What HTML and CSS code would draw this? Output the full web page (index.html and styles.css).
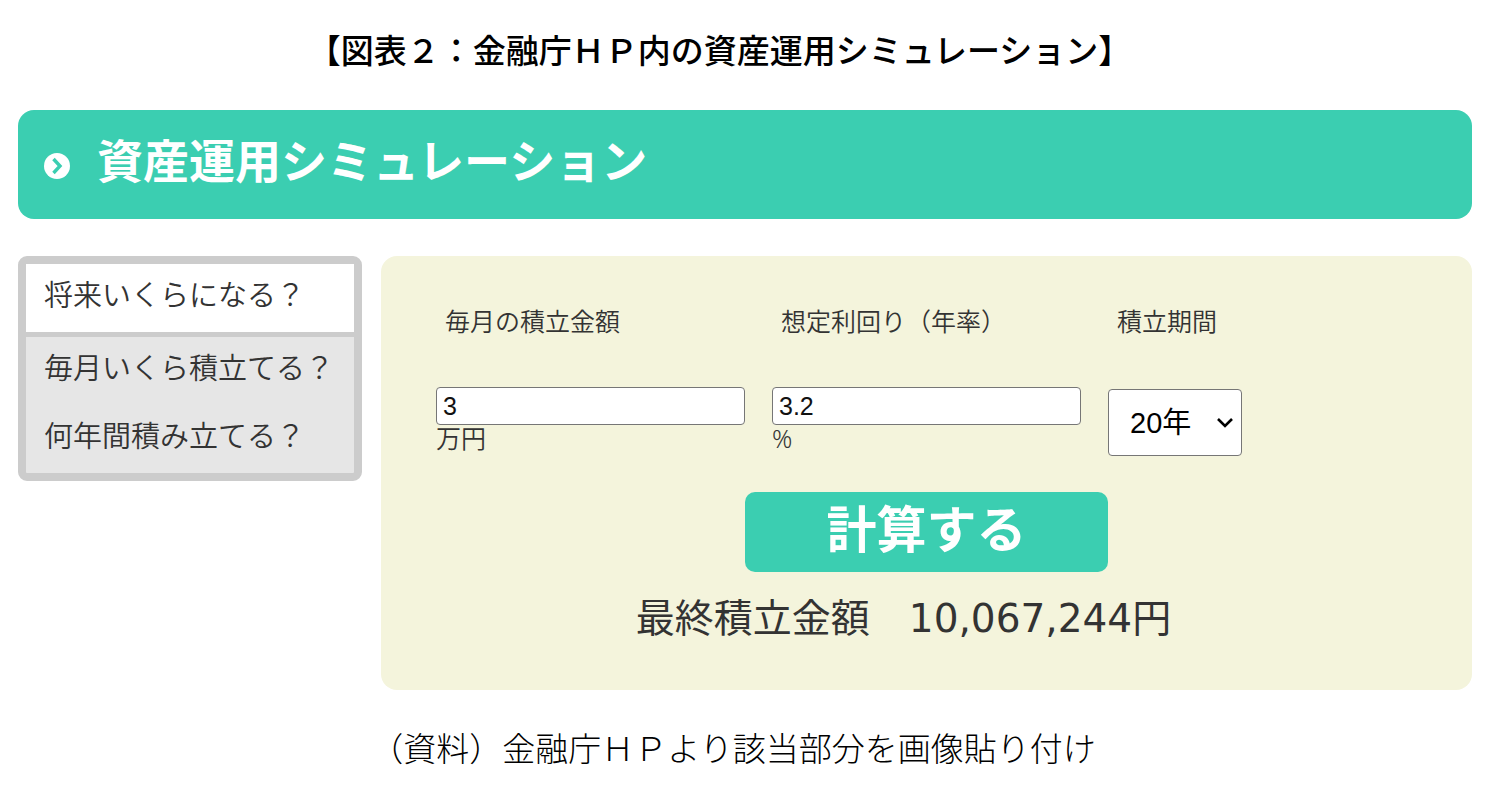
FILE: index.html
```html
<!DOCTYPE html>
<html lang="ja">
<head>
    <meta charset="UTF-8">
    <meta name="viewport" content="width=device-width, initial-scale=1.0">
    <title>資産運用シミュレーション</title>
    <link rel="stylesheet" href="styles.css">
</head>
<body>
    <h1 class="figure-title">【図表２：金融庁ＨＰ内の資産運用シミュレーション】</h1>

    <div class="banner">
        <svg class="banner-icon" viewBox="0 0 26 26" aria-hidden="true">
            <circle cx="13" cy="13" r="13" fill="#fff"/>
            <path d="M9.5 6l6.5 7-6.5 7" fill="none" stroke="#3bceb1" stroke-width="3.4"/>
        </svg>
        <h2>資産運用シミュレーション</h2>
    </div>

    <div class="content">
        <nav class="menu">
            <a href="#" class="active">将来いくらになる？</a>
            <a href="#">毎月いくら積立てる？</a>
            <a href="#">何年間積み立てる？</a>
        </nav>

        <form class="panel">
            <div class="fields">
                <div class="field">
                    <label for="amount">毎月の積立金額</label>
                    <input type="text" id="amount" value="3">
                    <span class="unit">万円</span>
                </div>
                <div class="field">
                    <label for="rate">想定利回り（年率）</label>
                    <input type="text" id="rate" value="3.2">
                    <span class="unit">%</span>
                </div>
                <div class="field">
                    <label for="years">積立期間</label>
                    <div class="select-wrap">
                        <select id="years">
                            <option>5年</option>
                            <option>10年</option>
                            <option selected>20年</option>
                            <option>30年</option>
                        </select>
                        <svg class="arrow" viewBox="0 0 18 12" aria-hidden="true">
                            <path d="M2 2l7 7 7-7" fill="none" stroke="#000" stroke-width="2.6"/>
                        </svg>
                    </div>
                </div>
            </div>

            <button type="button">計算する</button>

            <p class="result">最終積立金額　10,067,244円</p>
        </form>
    </div>

    <p class="source">（資料）金融庁ＨＰより該当部分を画像貼り付け</p>
</body>
</html>
```
FILE: styles.css
```css
* {
    box-sizing: border-box;
}

body {
    margin: 0;
    padding: 25px 24px 0 18px;
    background: #fff;
    color: #333;
    font-family: "DejaVu Sans", "Noto Sans CJK JP", sans-serif;
}

.figure-title {
    margin: 0 51px 37px 0;
    color: #000;
    font-family: "Noto Sans CJK JP", sans-serif;
    font-size: 33px;
    font-weight: 500;
    line-height: 48px;
    text-align: center;
}

.banner {
    display: flex;
    align-items: center;
    gap: 27px;
    padding: 14px 26px 26px;
    border-radius: 16px;
    background: #3bceb1;
}

.banner-icon {
    width: 26px;
    height: 26px;
    margin-top: 14px;
}

.banner h2 {
    margin: 0;
    color: #fff;
    font-family: "Noto Sans CJK JP", sans-serif;
    font-size: 46px;
    font-weight: bold;
    line-height: 69px;
}

.content {
    display: flex;
    align-items: flex-start;
    gap: 19px;
    margin-top: 37px;
}

.menu {
    flex: 0 0 344px;
    border: 8px solid #ccc;
    border-radius: 9px;
    background: #e6e6e6;
}

.menu a {
    display: block;
    padding: 8px 18px 12px;
    color: #333;
    font-size: 29px;
    font-weight: 350;
    line-height: 48px;
    text-decoration: none;
}

.menu .active {
    border-bottom: 5px solid #ccc;
    background: #fff;
}

.panel {
    flex: 1;
    padding: 49px 0 43px;
    border-radius: 16px;
    background: #f4f4dc;
}

.fields {
    display: grid;
    grid-template-columns: repeat(3, 1fr);
    padding: 0 28px 0 55px;
}

.field label {
    display: block;
    margin-bottom: 46px;
    padding-left: 9px;
    font-size: 25px;
    font-weight: 350;
    line-height: 36px;
}

.field input {
    display: block;
    width: 92%;
    height: 38px;
    padding: 0 6px;
    border: 1px solid #767676;
    border-radius: 4px;
    background: #fff;
    color: #111;
    font-family: "Liberation Sans", sans-serif;
    font-size: 25px;
}

.unit {
    display: block;
    font-family: "Noto Sans", "Noto Sans CJK JP", sans-serif;
    font-size: 25px;
    font-weight: 350;
    line-height: 26px;
}

.select-wrap {
    position: relative;
    width: 134px;
    margin-top: 48px;
}

.field select {
    display: block;
    width: 100%;
    height: 67px;
    padding: 0 21px;
    border: 1px solid #767676;
    border-radius: 4px;
    background: #fff;
    color: #000;
    font-family: "Liberation Sans", "Noto Sans CJK JP", sans-serif;
    font-size: 29px;
    appearance: none;
}

.arrow {
    position: absolute;
    top: 28px;
    right: 8px;
    width: 18px;
    height: 12px;
    pointer-events: none;
}

.panel button {
    display: block;
    width: 33.3%;
    height: 80px;
    margin: 36px auto 0;
    padding: 0 0 12px;
    border: none;
    border-radius: 10px;
    background: #3bceb1;
    color: #fff;
    font-family: "Noto Sans CJK JP", sans-serif;
    font-size: 50px;
    font-weight: bold;
    line-height: 68px;
    cursor: pointer;
}

.result {
    margin: 19px 46px 0 0;
    font-size: 39px;
    font-weight: 400;
    line-height: 56px;
    text-align: center;
}

.source {
    margin: 36px 24px 0 0;
    color: #000;
    font-family: "Liberation Serif", "Noto Sans CJK JP", serif;
    font-size: 33px;
    font-weight: 300;
    line-height: 48px;
    text-align: center;
}
```
